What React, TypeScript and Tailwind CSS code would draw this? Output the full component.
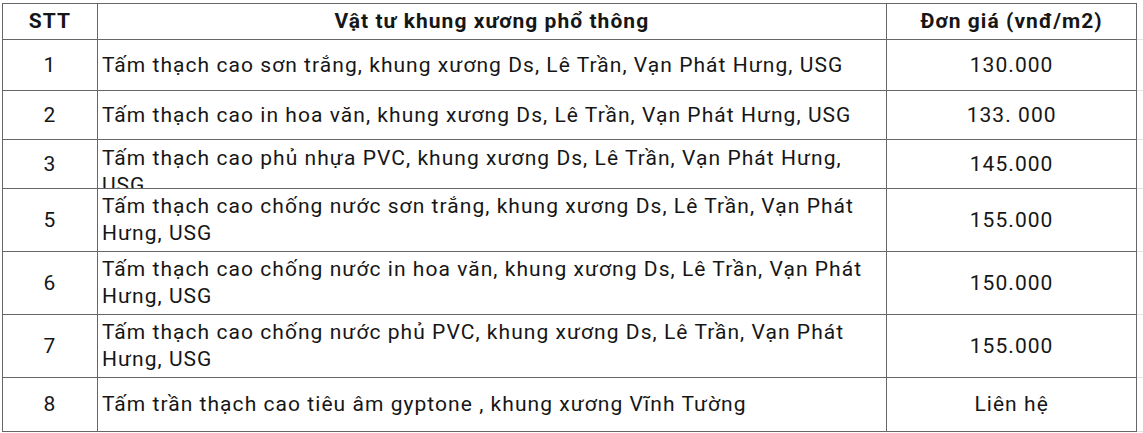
const rows: { stt: string; name: string; price: string; h: number; clip?: boolean }[] = [
  { stt: "1", name: "Tấm thạch cao sơn trắng, khung xương Ds, Lê Trần, Vạn Phát Hưng, USG", price: "130.000", h: 51 },
  { stt: "2", name: "Tấm thạch cao in hoa văn, khung xương Ds, Lê Trần, Vạn Phát Hưng, USG", price: "133. 000", h: 49 },
  { stt: "3", name: "Tấm thạch cao phủ nhựa PVC, khung xương Ds, Lê Trần, Vạn Phát Hưng, USG", price: "145.000", h: 49, clip: true },
  { stt: "5", name: "Tấm thạch cao chống nước sơn trắng, khung xương Ds, Lê Trần, Vạn Phát Hưng, USG", price: "155.000", h: 63 },
  { stt: "6", name: "Tấm thạch cao chống nước in hoa văn, khung xương Ds, Lê Trần, Vạn Phát Hưng, USG", price: "150.000", h: 63 },
  { stt: "7", name: "Tấm thạch cao chống nước phủ PVC, khung xương Ds, Lê Trần, Vạn Phát Hưng, USG", price: "155.000", h: 63 },
  { stt: "8", name: "Tấm trần thạch cao tiêu âm gyptone , khung xương Vĩnh Tường", price: "Liên hệ", h: 54 },
];

export default function App() {
  return (
    <div className="min-h-screen bg-white pl-[2px] pt-[3px] font-['Roboto','Liberation_Sans',sans-serif] text-[21px] leading-[27px] tracking-[1.05px] text-[#161616]">
      <table className="table-fixed border-collapse">
        <colgroup>
          <col className="w-[95px]" />
          <col className="w-[790px]" />
          <col className="w-[251px]" />
          <col className="w-[6px]" />
        </colgroup>
        <thead>
          <tr className="h-[36px]">
            <th className="border border-[#666] text-center font-bold">STT</th>
            <th className="border border-[#666] text-center font-bold">Vật tư khung xương phổ thông</th>
            <th className="border border-[#666] text-center font-bold">Đơn giá (vnđ/m2)</th>
            <th className="border-b border-[#e2e2e2]"></th>
          </tr>
        </thead>
        <tbody>
          {rows.map((r) => (
            <tr key={r.stt} style={{ height: r.h }}>
              <td className="border border-[#666] text-center align-middle">{r.stt}</td>
              {r.clip ? (
                <td className="border border-[#666] p-0 align-top">
                  <div className="overflow-hidden px-[4px] pt-[5px]" style={{ height: r.h - 1 }}>
                    {r.name}
                  </div>
                </td>
              ) : (
                <td className="border border-[#666] px-[4px] align-middle">{r.name}</td>
              )}
              <td className="border border-[#666] text-center align-middle">{r.price}</td>
              <td className="border-b border-[#e2e2e2]"></td>
            </tr>
          ))}
        </tbody>
      </table>
    </div>
  );
}
